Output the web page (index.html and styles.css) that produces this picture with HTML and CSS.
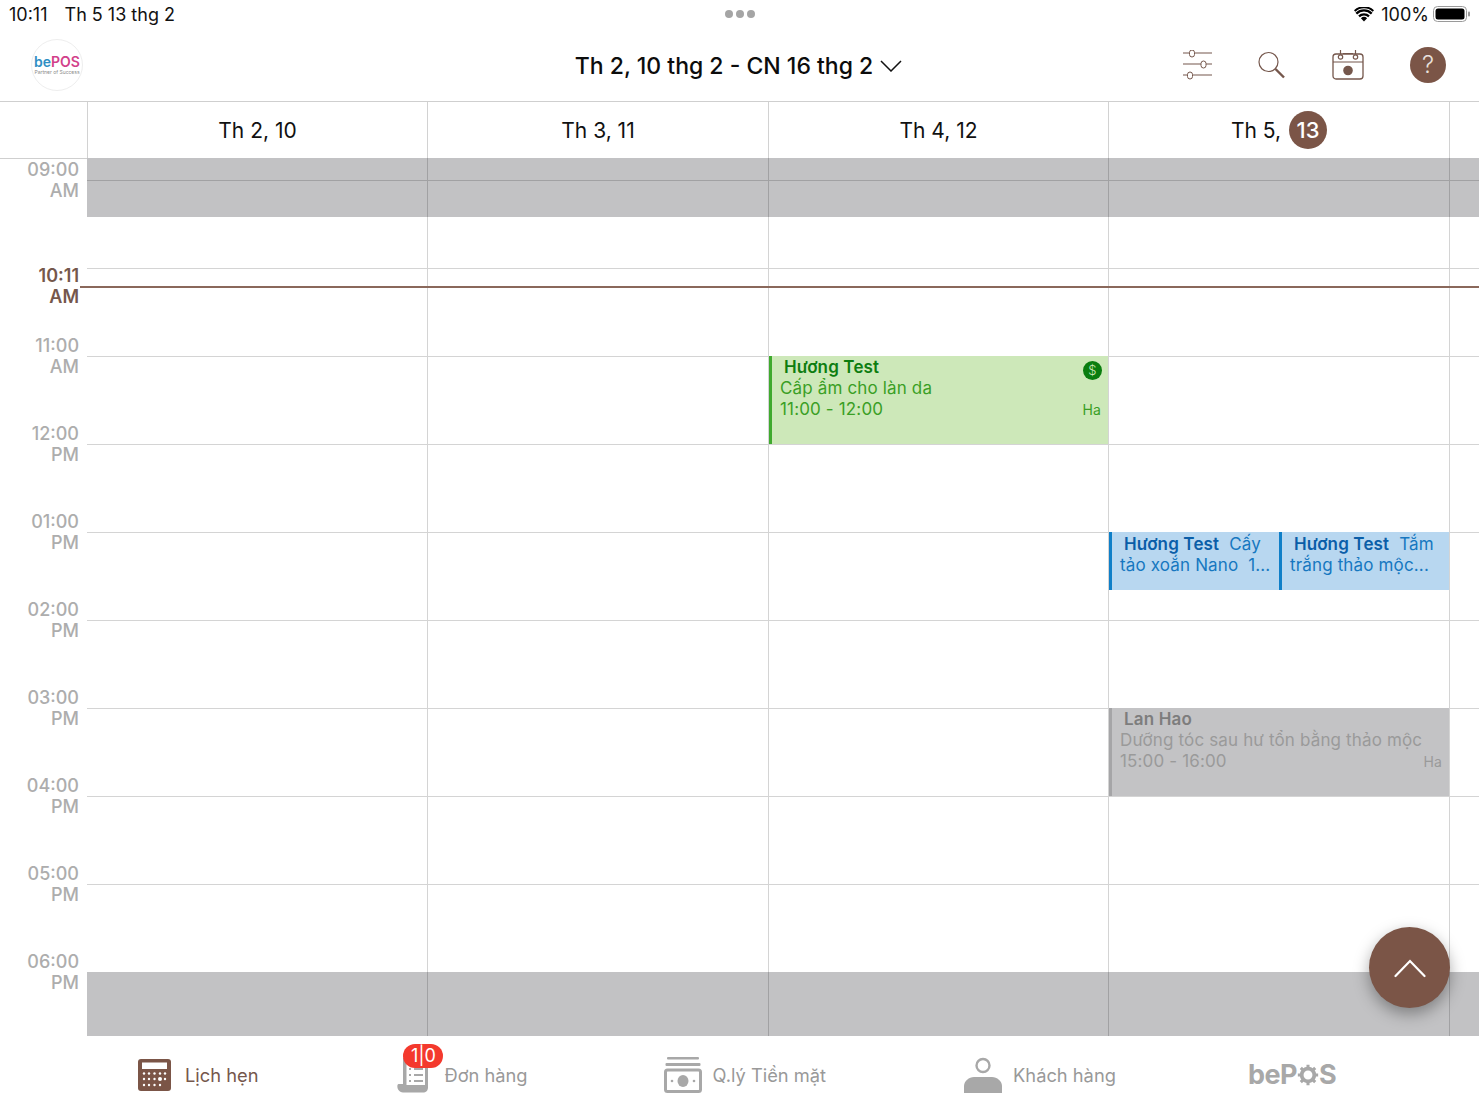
FILE: index.html
```html
<!DOCTYPE html>
<html lang="vi">
<head>
    <meta charset="UTF-8">
    <meta name="viewport" content="width=device-width, initial-scale=1.0">
    <title>Lịch hẹn</title>
    <link rel="stylesheet" href="styles.css">
</head>
<body>
<div class="app">
    <div class="status">
        <div class="status-left"><span>10:11</span><span>Th 5 13 thg 2</span></div>
        <div class="status-dots"><i></i><i></i><i></i></div>
        <div class="status-right">
            <svg class="wifi" viewBox="0 0 20 15" width="20" height="15">
                <path d="M10 14.6 6.9 11.2a4.5 4.5 0 0 1 6.2 0z" fill="#000"/>
                <path d="M2.3 6.6a11 11 0 0 1 15.4 0M5 9.3a7.3 7.3 0 0 1 10 0" fill="none" stroke="#000" stroke-width="2.3"/>
                <path d="M.6 4a13.6 13.6 0 0 1 18.8 0" fill="none" stroke="#000" stroke-width="2"/>
            </svg>
            <span class="battery-text">100%</span>
            <svg class="battery" viewBox="0 0 38 16" width="38" height="16">
                <rect x=".5" y=".5" width="33" height="15" rx="4" fill="none" stroke="#9a9a9a"/>
                <rect x="2.5" y="2.5" width="29" height="11" rx="2.5" fill="#000"/>
                <rect x="35" y="5.5" width="2" height="5" rx="1" fill="#9a9a9a"/>
            </svg>
        </div>
    </div>

    <div class="toolbar">
        <div class="logo">
            <div class="logo-name"><span class="logo-be">be</span><span class="logo-pos">POS</span></div>
            <div class="logo-tag">Partner of Success</div>
        </div>
        <div class="range">
            <span>Th 2, 10 thg 2 - CN 16 thg 2</span>
            <svg viewBox="0 0 22 12" width="22" height="12"><path d="M1 1l10 10L21 1" fill="none" stroke="#111" stroke-width="1.5"/></svg>
        </div>
        <div class="tools">
            <svg viewBox="0 0 30 30" width="30" height="30" class="icon">
                <path d="M1 3h29M1 14h29M1 25h29" stroke-width="1.2"/>
                <rect x="7.5" y="0" width="5" height="7" rx="2.5" fill="#fff"/>
                <rect x="19" y="11" width="5" height="7" rx="2.5" fill="#fff"/>
                <rect x="5.5" y="22" width="5" height="7" rx="2.5" fill="#fff"/>
            </svg>
            <svg viewBox="0 0 30 30" width="30" height="30" class="icon">
                <circle cx="11.500" cy="12" r="9.500" stroke-width="1.200"/>
                <path d="M18.500 19l8.500 8.500" stroke-width="2.400"/>
            </svg>
            <svg viewBox="0 0 32 32" width="32" height="32" class="icon icon-calendar">
                <rect x="1" y="5" width="30" height="25" rx="3" stroke-width="1.300"/>
                <path d="M1 13h30M11 4.500h10" stroke-width="1.200"/>
                <path d="M8.500 1v5M23.500 1v5" stroke-width="1.200"/>
                <circle cx="8.500" cy="8" r="2.200" fill="#fff" stroke-width="1.200"/>
                <circle cx="23.500" cy="8" r="2.200" fill="#fff" stroke-width="1.200"/>
                <circle cx="16" cy="21.500" r="4.800" class="icon-fill"/>
            </svg>
            <div class="help">?</div>
        </div>
    </div>

    <div class="days">
        <div class="day-gutter"></div>
        <div class="day">Th 2, 10</div>
        <div class="day">Th 3, 11</div>
        <div class="day">Th 4, 12</div>
        <div class="day">Th 5,<span class="today">13</span></div>
        <div class="day"></div>
    </div>

    <div class="schedule">
        <div class="closed closed-top"></div>
        <div class="closed closed-bottom"></div>

        <div class="gutter">
            <div class="time">09:00<br>AM</div>
            <div class="time"></div>
            <div class="time">11:00<br>AM</div>
            <div class="time">12:00<br>PM</div>
            <div class="time">01:00<br>PM</div>
            <div class="time">02:00<br>PM</div>
            <div class="time">03:00<br>PM</div>
            <div class="time">04:00<br>PM</div>
            <div class="time">05:00<br>PM</div>
            <div class="time">06:00<br>PM</div>
        </div>

        <div class="col col-1">
            <div class="hour-top"></div>
            <div class="hour"></div><div class="hour"></div><div class="hour"></div><div class="hour"></div><div class="hour"></div>
            <div class="hour"></div><div class="hour"></div><div class="hour"></div><div class="hour"></div><div class="hour"></div>
        </div>
        <div class="col col-2">
            <div class="hour-top"></div>
            <div class="hour"></div><div class="hour"></div><div class="hour"></div><div class="hour"></div><div class="hour"></div>
            <div class="hour"></div><div class="hour"></div><div class="hour"></div><div class="hour"></div><div class="hour"></div>
        </div>
        <div class="col col-3">
            <div class="hour-top"></div>
            <div class="hour"></div><div class="hour"></div><div class="hour"></div><div class="hour"></div><div class="hour"></div>
            <div class="hour"></div><div class="hour"></div><div class="hour"></div><div class="hour"></div><div class="hour"></div>
            <div class="slot slot-11">
                <div class="event event-green">
                    <div class="event-title">Hương Test</div>
                    <div>Cấp ẩm cho làn da</div>
                    <div>11:00 - 12:00</div>
                    <div class="paid">$</div>
                    <div class="staff">Ha</div>
                </div>
            </div>
        </div>
        <div class="col col-4">
            <div class="hour-top"></div>
            <div class="hour"></div><div class="hour"></div><div class="hour"></div><div class="hour"></div><div class="hour"></div>
            <div class="hour"></div><div class="hour"></div><div class="hour"></div><div class="hour"></div><div class="hour"></div>
            <div class="slot slot-13">
                <div class="event event-blue">
                    <div><span class="event-title">Hương Test</span>&nbsp; Cấy</div>
                    <div>tảo xoắn Nano&nbsp; 1...</div>
                </div>
                <div class="event event-blue">
                    <div><span class="event-title">Hương Test</span>&nbsp; Tắm</div>
                    <div>trắng thảo mộc...</div>
                </div>
            </div>
            <div class="slot slot-15">
                <div class="event event-gray">
                    <div class="event-title">Lan Hao</div>
                    <div>Dưỡng tóc sau hư tổn bằng thảo mộc</div>
                    <div>15:00 - 16:00</div>
                    <div class="staff">Ha</div>
                </div>
            </div>
        </div>
        <div class="col col-5">
            <div class="hour-top"></div>
            <div class="hour"></div><div class="hour"></div><div class="hour"></div><div class="hour"></div><div class="hour"></div>
            <div class="hour"></div><div class="hour"></div><div class="hour"></div><div class="hour"></div><div class="hour"></div>
        </div>

        <div class="now">
            <div class="now-label">10:11<br>AM</div>
            <div class="now-line"></div>
        </div>
    </div>

    <div class="tabs">
        <div class="tab tab-active">
            <svg viewBox="0 0 33 32" width="33" height="32">
                <rect width="33" height="32" rx="3" fill="#7b5547"/>
                <rect x="4" y="3.500" width="25" height="6.500" fill="#fff"/>
                <g fill="#fff">
                    <circle cx="6" cy="14.500" r="1.200"/><circle cx="11" cy="14.500" r="1.200"/><circle cx="16.500" cy="14.500" r="1.200"/><circle cx="22" cy="14.500" r="1.200"/><circle cx="27" cy="14.500" r="1.200"/>
                    <circle cx="6" cy="20" r="1.200"/><circle cx="11" cy="20" r="1.200"/><circle cx="16.500" cy="20" r="1.200"/><circle cx="22" cy="20" r="2"/><circle cx="27" cy="20" r="1.200"/>
                    <circle cx="6" cy="26" r="1.200"/><circle cx="11" cy="26" r="1.200"/><circle cx="16.500" cy="26" r="1.200"/><circle cx="22" cy="26" r="1.200"/>
                </g>
            </svg>
            <span>Lịch hẹn</span>
        </div>
        <div class="tab tab-orders">
            <div class="receipt">
                <svg viewBox="0 0 33 36" width="33" height="36">
                    <path d="M6 1v26H1.500c-1.500 0-1.500 4 0 6 1 1.500 2.500 2.500 4.500 2.500h20c3 0 5-2 5-5V1z" fill="#a8a8a8"/>
                    <rect x="9.500" y="3" width="18.500" height="25" fill="#fff"/>
                    <path d="M3 30h19c0 2 .5 3.500 1.500 3.500H6c-1.500 0-3-1.500-3-3.500z" fill="#a8a8a8"/>
                    <path d="M12 12h2M17 12h9M12 18h2M17 18h9M12 24h2M17 24h9" stroke="#a8a8a8" stroke-width="2"/>
                </svg>
                <div class="badge">1|0</div>
            </div>
            <span>Đơn hàng</span>
        </div>
        <div class="tab tab-cash">
            <svg viewBox="0 0 38 36" width="38" height="36">
                <rect x="3" y="0" width="32" height="2.500" rx="1" fill="#a8a8a8"/>
                <rect x="1.500" y="6" width="35" height="3" rx="1" fill="#a8a8a8"/>
                <rect x="1.500" y="13" width="35" height="21.500" rx="2" fill="#fff" stroke="#a8a8a8" stroke-width="3"/>
                <ellipse cx="19" cy="24" rx="5.500" ry="6" fill="#a8a8a8"/>
                <circle cx="8" cy="24" r="1.300" fill="#a8a8a8"/><circle cx="30" cy="24" r="1.300" fill="#a8a8a8"/>
            </svg>
            <span>Q.lý Tiền mặt</span>
        </div>
        <div class="tab tab-customer">
            <svg viewBox="0 0 38 36" width="38" height="36">
                <circle cx="19" cy="8.500" r="6.500" fill="none" stroke="#a8a8a8" stroke-width="2.400"/>
                <path d="M0 36v-7c0-5 5-9 10-9h18c5 0 10 4 10 9v7z" fill="#a8a8a8"/>
            </svg>
            <span>Khách hàng</span>
        </div>
        <div class="tab-brand">
            <span>beP</span>
            <svg viewBox="0 0 26 26" width="22" height="22">
                <circle cx="13" cy="13" r="7.500" fill="none" stroke="#a8a8a8" stroke-width="4.500"/>
                <path d="M13 1v4M13 21v4M1 13h4M21 13h4M4.500 4.500l3 3M18.500 18.500l3 3M21.500 4.500l-3 3M7.500 18.500l-3 3" stroke="#a8a8a8" stroke-width="3.600"/>
            </svg>
            <span>S</span>
        </div>
    </div>

    <div class="fab">
        <svg viewBox="0 0 32 20" width="32" height="20"><path d="M1.500 18 16 3l14.500 15" fill="none" stroke="#fff" stroke-width="2.200" stroke-linecap="round"/></svg>
    </div>
</div>
</body>
</html>
```

FILE: styles.css
```css
* {
    box-sizing: border-box;
}

body {
    margin: 0;
    background-color: #fff;
    font-family: Inter, "Noto Sans", sans-serif;
    color: #111;
    overflow: hidden;
}

.app {
    position: relative;
    display: flex;
    flex-direction: column;
    width: 1479px;
    height: 1109px;
    overflow: hidden;
}

/* status bar */
.status {
    display: grid;
    grid-template-columns: 1fr auto 1fr;
    align-items: center;
    height: 30px;
    padding: 0 8px 2px 9px;
    font-size: 18px;
}

.status-left {
    display: flex;
    gap: 17px;
}

.status-dots {
    display: flex;
    gap: 3px;
}

.status-dots i {
    width: 8px;
    height: 8px;
    border-radius: 50%;
    background-color: #a5a5a5;
}

.status-right {
    display: flex;
    justify-content: flex-end;
    align-items: center;
    gap: 7px;
}

.battery-text {
    margin-right: -3px;
}

/* toolbar */
.toolbar {
    display: grid;
    grid-template-columns: 1fr auto 1fr;
    align-items: center;
    height: 72px;
    padding: 0 33px 2px 31px;
    border-bottom: 1px solid #cfcfcf;
}

.logo {
    display: flex;
    flex-direction: column;
    align-items: center;
    justify-content: center;
    width: 52px;
    height: 52px;
    border: 1px solid #eeeeee;
    border-radius: 50%;
}

.logo-name {
    font-size: 14px;
    font-weight: 600;
    line-height: 15px;
    white-space: nowrap;
}

.logo-be {
    color: #2f8fc4;
}

.logo-pos {
    color: #d23f8a;
}

.logo-tag {
    font-size: 5px;
    line-height: 6px;
    color: #8b8b8b;
    white-space: nowrap;
}

.range {
    display: flex;
    align-items: center;
    gap: 7px;
    font-size: 23px;
    font-weight: 500;
    color: #0c0c0c;
    margin-top: 2px;
}

.tools {
    display: flex;
    justify-content: flex-end;
    align-items: center;
    gap: 45px;
}

.icon {
    fill: none;
    stroke: #75574c;
}

.icon-calendar {
    margin-right: 1px;
}

.icon-fill {
    fill: #75574c;
    stroke: none;
}

.help {
    display: flex;
    justify-content: center;
    align-items: center;
    width: 36px;
    height: 36px;
    border-radius: 50%;
    background-color: #7b5547;
    color: #e9e1dd;
    font-size: 24px;
    font-weight: 300;
}

/* day header */
.days {
    display: grid;
    grid-template-columns: 87px 340px 341px 340px 341px 1fr;
    height: 56px;
}

.day {
    display: flex;
    justify-content: center;
    align-items: center;
    gap: 8px;
    border-left: 1px solid #d2d2d2;
    font-size: 21px;
}

.today {
    display: flex;
    justify-content: center;
    align-items: center;
    width: 38px;
    height: 38px;
    border-radius: 50%;
    background-color: #7b5547;
    color: #fff;
    font-size: 22px;
    font-weight: 500;
}

/* schedule */
.schedule {
    position: relative;
    display: grid;
    grid-template-columns: 87px 340px 341px 340px 341px 1fr;
    grid-template-rows: 878px;
    height: 878px;
    overflow: hidden;
}

.closed {
    grid-area: 1 / 2 / 2 / -1;
    background-color: #c2c2c4;
}

.closed-top {
    align-self: start;
    height: 59px;
}

.closed-bottom {
    align-self: end;
    height: 64px;
}

.gutter {
    grid-area: 1 / 1 / 2 / 2;
    border-top: 1px solid #cfcfcf;
    padding-right: 8px;
}

.time {
    display: flex;
    align-items: center;
    justify-content: flex-end;
    height: 88px;
    font-size: 18px;
    font-weight: 500;
    line-height: 21px;
    text-align: right;
    color: #adadad;
}

.time:first-child {
    margin-top: -23px;
}

.col {
    position: relative;
    grid-row: 1;
    border-left: 1px solid rgba(0, 0, 0, 0.17);
}

.col-1 {
    grid-column: 2;
    border-left: 0;
}

.col-2 {
    grid-column: 3;
}

.col-3 {
    grid-column: 4;
}

.col-4 {
    grid-column: 5;
}

.col-5 {
    grid-column: 6;
}

.hour-top {
    height: 22px;
}

.hour {
    height: 88px;
    border-top: 1px solid rgba(0, 0, 0, 0.17);
}

/* the 18:00 line sits on the edge of the closed band and doesn't show */
.hour:nth-child(11) {
    border-top-color: transparent;
}

.slot {
    position: absolute;
    left: 0;
    right: 0;
    display: flex;
}

.slot-11 {
    top: 198px;
    height: 88px;
}

.slot-13 {
    top: 374px;
    height: 58px;
}

.slot-15 {
    top: 550px;
    height: 88px;
}

.event {
    position: relative;
    flex: 1;
    min-width: 0;
    padding: 1px 0 0 8px;
    border-left: 3px solid;
    font-size: 17px;
    line-height: 21px;
    letter-spacing: 0.15px;
    white-space: nowrap;
}

.event-title {
    font-weight: 600;
    padding-left: 4px;
}

.event-green {
    background-color: #cde8b9;
    border-color: #3faa2e;
    color: #3a9f25;
}

.event-green .event-title {
    color: #0d7d10;
}

.event-blue {
    background-color: #b8d7f0;
    border-color: #0f7fc8;
    color: #1677c0;
    padding-top: 2px;
}

.event-blue .event-title {
    color: #0b5ea8;
}

.event-gray {
    background-color: #c3c3c5;
    border-color: #a5a5a7;
    color: #9a9a9a;
}

.event-gray .event-title {
    color: #7d7d7d;
}

.paid {
    position: absolute;
    top: 5px;
    right: 6px;
    width: 19px;
    height: 19px;
    border-radius: 50%;
    background-color: #0a7d0f;
    color: #cde8b9;
    font-size: 13px;
    font-weight: 300;
    line-height: 19px;
    text-align: center;
}

.staff {
    position: absolute;
    top: 43px;
    right: 7px;
    font-size: 14px;
}

.now {
    position: absolute;
    top: 128px;
    left: 0;
    right: 0;
}

.now-label {
    position: absolute;
    top: -21px;
    left: 0;
    width: 79px;
    font-size: 18px;
    font-weight: 600;
    line-height: 21px;
    text-align: right;
    color: #75574c;
}

.now-line {
    height: 2px;
    margin-left: 80px;
    background-color: #8a685b;
}

/* bottom tabs */
.tabs {
    display: flex;
    align-items: center;
    gap: 136px;
    height: 73px;
    padding: 4px 0 0 138px;
}

.tab {
    display: flex;
    align-items: center;
    gap: 14px;
    font-size: 18.300px;
    color: #999;
}

.tab-active {
    color: #75574c;
}

.tab-orders {
    margin-left: 3px;
}

.tab-cash,
.tab-customer {
    gap: 11px;
}

.tab-customer {
    margin-left: 2px;
}

.receipt {
    position: relative;
    height: 36px;
}

.badge {
    position: absolute;
    top: -13px;
    left: 6px;
    width: 40px;
    height: 24px;
    border-radius: 12px;
    background-color: #f4392d;
    color: #fff;
    font-size: 18px;
    line-height: 24px;
    text-align: center;
}

.tab-brand {
    display: flex;
    align-items: center;
    margin-left: -4px;
    font-size: 27px;
    font-weight: 700;
    letter-spacing: -0.5px;
    color: #a8a8a8;
}

.fab {
    position: absolute;
    top: 927px;
    left: 1369px;
    display: flex;
    justify-content: center;
    align-items: center;
    width: 81px;
    height: 81px;
    border-radius: 50%;
    background-color: #7b5547;
    box-shadow: 0 6px 16px rgba(0, 0, 0, 0.35);
}
```
